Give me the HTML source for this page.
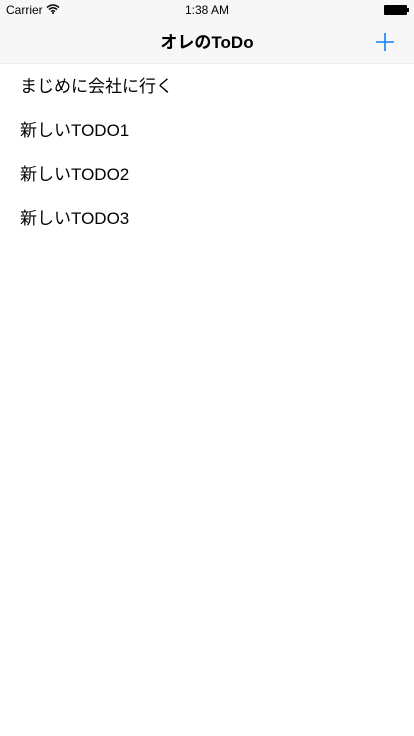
<!DOCTYPE html>
<html><head><meta charset="utf-8"><style>
*{margin:0;padding:0;box-sizing:border-box}
body{width:414px;height:736px;background:#fff;font-family:"Liberation Sans","Noto Sans CJK JP",sans-serif;position:relative;overflow:hidden}
.bar{position:absolute;left:0;top:0;width:414px;height:64px;background:#f7f7f7;border-bottom:1px solid #ececec}
.sb{position:absolute;top:3px;font-size:12px;color:#000}
.title{position:absolute;top:32px;left:0;width:414px;text-align:center;font-size:17px;font-weight:bold;line-height:22px}
.row{position:absolute;left:20px;font-size:17px;line-height:22px;color:#000}
</style></head><body>
<div class="bar">
<div class="sb" style="left:6px">Carrier <svg width="14" height="10" viewBox="0 0 14 10" style="vertical-align:0"><path d="M1 3.5Q7 -1.5 13 3.5M3 5.5Q7 2 11 5.5M5 7.5Q7 6 9 7.5" stroke="#000" stroke-width="1.5" fill="none"/><circle cx="7" cy="9" r="1" fill="#000"/></svg></div>
<div class="sb" style="left:0;width:414px;text-align:center">1:38 AM</div>
<div style="position:absolute;left:384px;top:5px;width:23px;height:10px;background:#000;border-radius:1px"></div>
<div style="position:absolute;left:407px;top:8px;width:2px;height:4px;background:#000"></div>
<div class="title">オレのToDo</div>
<svg style="position:absolute;left:376px;top:33px" width="18" height="18"><path d="M9 0V18M0 9H18" stroke="#147efb" stroke-width="1.6"/></svg>
</div>
<div class="row" style="top:76px">まじめに会社に行く</div>
<div class="row" style="top:120px">新しいTODO1</div>
<div class="row" style="top:164px">新しいTODO2</div>
<div class="row" style="top:208px">新しいTODO3</div>
</body></html>
